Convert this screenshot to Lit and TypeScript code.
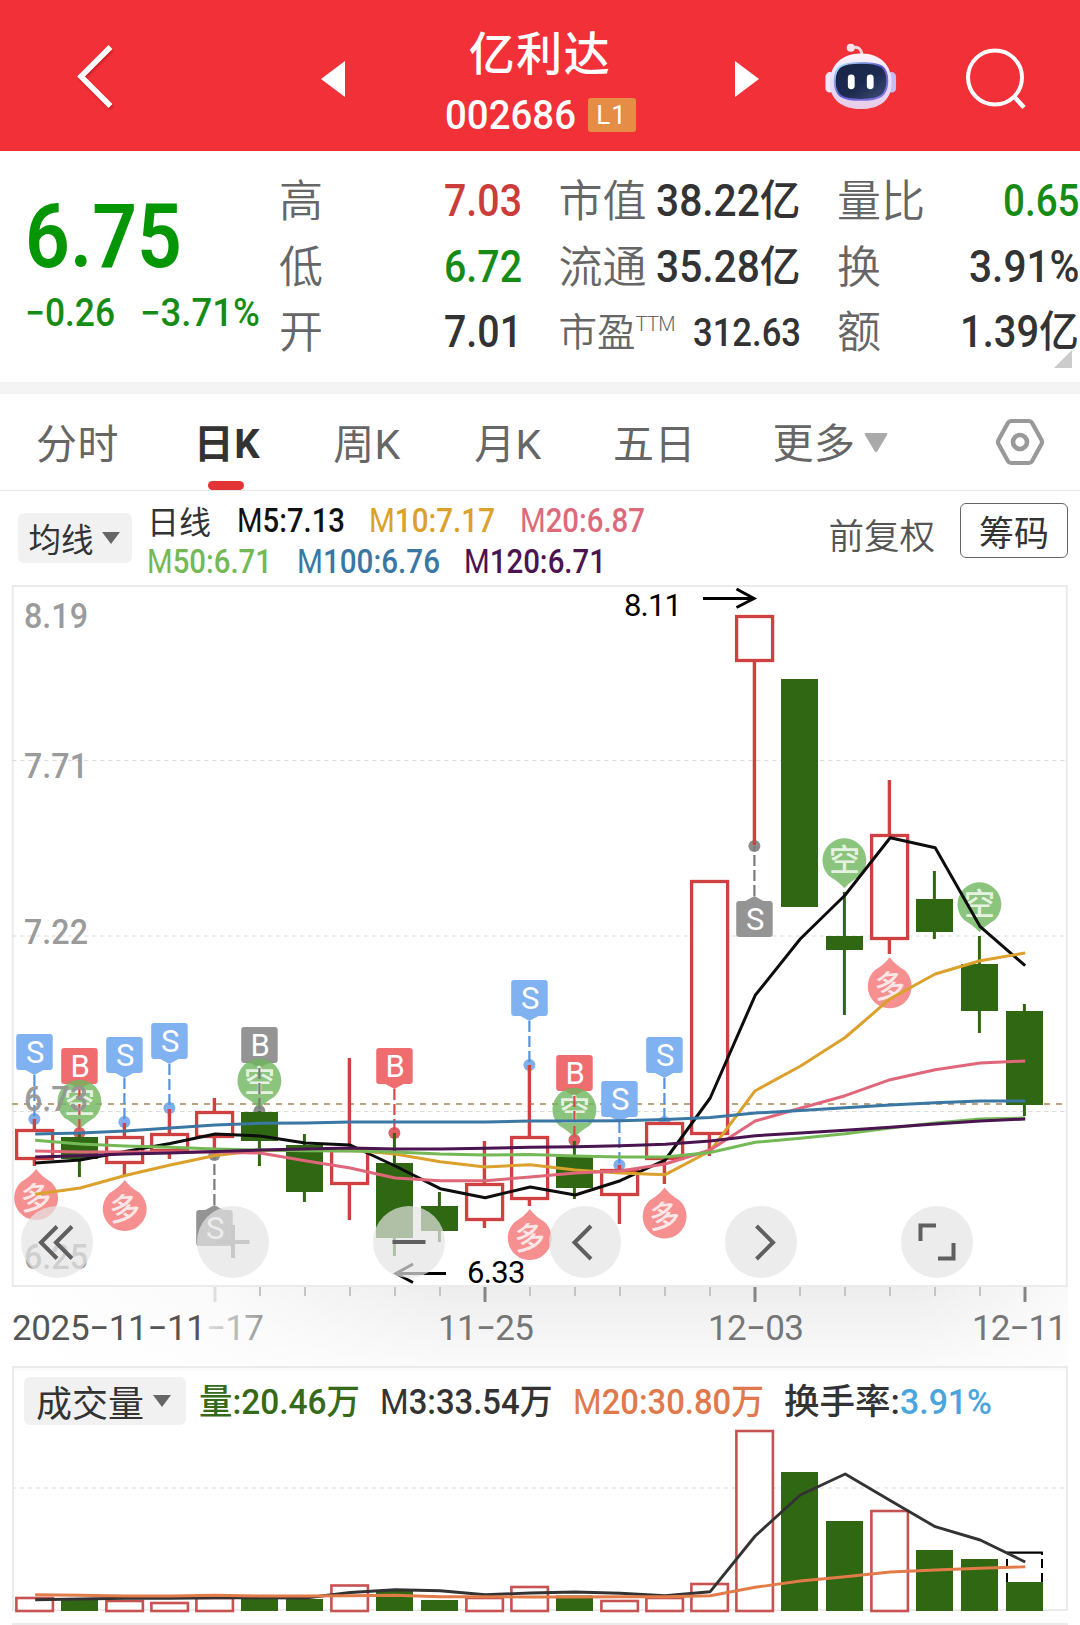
import { LitElement, html, svg, css, nothing } from "lit";
import { customElement, property } from "lit/decorators.js";

const RED = "#cf4040";
const GREEN = "#2f6713";
const STEP = 45;
const cx = (i: number) => 34.4 + i * STEP;

/* [rising, body top, body bottom, high, low] */
const candles: [boolean, number, number, number, number][] = [
  [true, 1129, 1160, 1119, 1166],
  [false, 1137, 1159, 1133, 1177],
  [true, 1136, 1164, 1123, 1175],
  [true, 1133, 1152, 1109, 1159],
  [true, 1111, 1138, 1098, 1154],
  [false, 1112, 1141, 1111, 1166],
  [false, 1145, 1192, 1134, 1202],
  [true, 1149, 1185, 1058, 1220],
  [false, 1163, 1238, 1133, 1256],
  [false, 1206, 1231, 1192, 1242],
  [true, 1183, 1221, 1141, 1228],
  [true, 1136, 1200, 1065, 1206],
  [false, 1157, 1188, 1141, 1199],
  [true, 1169, 1196, 1165, 1224],
  [true, 1122, 1160, 1122, 1184],
  [true, 880, 1135, 880, 1156],
  [true, 615, 662, 615, 845],
  [false, 679, 907, 679, 907],
  [false, 936, 950, 892, 1015],
  [true, 834, 940, 780, 954],
  [false, 899, 932, 871, 939],
  [false, 964, 1011, 936, 1033],
  [false, 1011, 1105, 1004, 1116],
];

const averages: { color: string; ys: number[] }[] = [
  { color: "#0d0d0d", ys: [1163, 1160, 1151.5, 1143.5, 1134, 1136, 1143, 1145, 1166, 1188.7, 1197.7, 1187, 1195, 1180.7, 1160, 1098, 995.3, 939, 895, 837.7, 847.7, 926.7, 965.7] },
  { color: "#dba12c", ys: [1194.3, 1188, 1175.5, 1165, 1155.5, 1150.5, 1150, 1150, 1154, 1161.7, 1167, 1164.7, 1170, 1173, 1174.7, 1151, 1090.7, 1066.3, 1037.5, 998.7, 974, 960.7, 953] },
  { color: "#e0667a", ys: [1151, 1152, 1152, 1152, 1152, 1153, 1160.7, 1168, 1178, 1180.7, 1180.7, 1177, 1173, 1171, 1164, 1150, 1121, 1108.3, 1095.7, 1079.7, 1069.7, 1063, 1061] },
  { color: "#74b956", ys: [1140.3, 1144, 1146, 1147.3, 1149, 1150, 1150.7, 1151, 1152, 1154, 1155, 1154.5, 1156, 1157, 1157, 1152.5, 1142.3, 1138.3, 1133.7, 1128, 1123, 1119, 1118] },
  { color: "#3b77a3", ys: [1134, 1133, 1131, 1128, 1125, 1123.3, 1123, 1122, 1122, 1122, 1122, 1121, 1121, 1120.7, 1119.5, 1117.5, 1113, 1110.6, 1107.7, 1105, 1102.7, 1101, 1101] },
  { color: "#4a1450", ys: [1157, 1155.7, 1154, 1153, 1151.6, 1150, 1149, 1148, 1149, 1149, 1148.3, 1147.3, 1146.7, 1145.7, 1144.3, 1141, 1135.7, 1133, 1130.3, 1127.3, 1124, 1121, 1119] },
];

/* [index, letter, kind, badge top, anchor dot y] */
const signals: [number, string, string, number, number][] = [
  [0, "S", "blue", 1034, 1119],
  [1, "B", "red", 1048, 1133],
  [2, "S", "blue", 1037, 1122],
  [3, "S", "blue", 1023, 1108],
  [4, "S", "gray", 1210, 1155],
  [5, "B", "gray", 1027, 1111],
  [8, "B", "red", 1048, 1133],
  [11, "S", "blue", 980, 1065],
  [12, "B", "red", 1055, 1140],
  [13, "S", "blue", 1081, 1165],
  [14, "S", "blue", 1037, 1122],
  [16, "S", "gray", 901, 846],
];
const signalFill: Record<string, string> = { blue: "#80b1f1", red: "#ef6c6f", gray: "#949494" };
const signalLine: Record<string, string> = { blue: "#5593dd", red: "#d9484c", gray: "#7b7b7b" };

/* [index, character, circle centre y, x shift] */
const balloons: [number, string, number, number][] = [
  [1, "空", 1101.7, 0],
  [5, "空", 1080.7, 0],
  [12, "空", 1109.7, 0],
  [18, "空", 860.3, 0],
  [21, "空", 904.3, 0],
  [0, "多", 1198, 1.7],
  [2, "多", 1209, 0.3],
  [11, "多", 1238, 0.3],
  [14, "多", 1216.5, 0.2],
  [19, "多", 986.3, 0.3],
];

const volumeTops = [1597, 1600, 1600, 1602, 1597, 1599, 1599, 1584.5, 1591, 1600, 1597, 1586, 1595.5, 1600, 1597, 1583, 1430, 1472, 1521, 1510, 1550, 1559, 1582];
const volumeUp = candles.map((c) => c[0]);
const volM3 = [1599.7, 1599, 1598.3, 1598.3, 1597.7, 1597.7, 1598, 1592.5, 1589.7, 1590.7, 1594.7, 1593, 1592, 1593.3, 1595.7, 1591.7, 1536, 1495, 1474, 1500.5, 1526.7, 1540, 1562];
const volM20 = [1594.8, 1595.3, 1596, 1596, 1595.3, 1596, 1596, 1595.7, 1595.2, 1596.7, 1596.8, 1597, 1597, 1596.8, 1596.7, 1595.7, 1587.3, 1581, 1576.7, 1572, 1570, 1568.3, 1566.8];

const points = (ys: number[]) => ys.map((y, i) => `${(cx(i) + 0.8).toFixed(1)},${y}`).join(" ");

/* Text condensed or widened to a fixed advance; its bottom edge is the baseline. */
@customElement("fit-text")
class FitText extends LitElement {
  @property() text = "";
  @property() lead = "";
  @property({ type: Number }) w = 100;
  @property({ type: Number }) size = 32;
  static styles = css`
    :host { display: block; flex: none; }
    svg { display: block; overflow: visible; }
    text { fill: currentColor; font-family: Roboto, "Noto Sans CJK SC", sans-serif; }
    .lead { font-weight: 400; }
  `;
  render() {
    const h = Math.round(this.size * 0.72);
    return html`<svg width=${this.w} height=${h}>
      <text x="0" y=${h} font-size=${this.size} textLength=${this.w} lengthAdjust="spacingAndGlyphs">${this.lead ? svg`<tspan class="lead">${this.lead}</tspan>` : nothing}${this.text}</text>
    </svg>`;
  }
}

@customElement("stock-header")
class StockHeader extends LitElement {
  static styles = css`
    :host { display: grid; grid-template-columns: 305px 56px 358px 56px 36px 104px 1fr; height: 151px; background: #f23038; color: #fff; align-items: center; }
    svg { display: block; }
    .back { margin-left: 71px; margin-top: 1px; filter: drop-shadow(1px 2px 1px rgba(120, 0, 0, 0.35)); }
    .prev { margin-left: 15px; margin-top: 7px; }
    .next { margin-left: 15px; margin-top: 7px; }
    .mid { display: flex; flex-direction: column; align-items: center; margin-top: 9px; }
    .name { font: 500 46px/56px "Noto Sans CJK SC", sans-serif; letter-spacing: 1.5px; margin-top: 2px; }
    .code { display: flex; align-items: center; gap: 12px; font-weight: 400; margin-top: 20px; margin-bottom: 9px; height: 34px; }
    .num { font-weight: 500; }
    .lv { width: 48px; height: 34px; border-radius: 3px; background: #e58d45; font: 400 26px/35px Roboto, sans-serif; text-align: center; letter-spacing: 1px; }
    .bot { margin-left: 13px; margin-top: 1px; }
    .search { margin-left: 48px; margin-top: 6px; }
  `;
  render() {
    return html`
      <svg class="back" width="44" height="68" viewBox="0 0 44 68"><path d="M39.5 5 10 34.5 39.5 64" fill="none" stroke="#fff" stroke-width="5.500" /></svg>
      <svg class="prev" width="26" height="36"><path d="M1 18 25 0V36Z" fill="#fff" /></svg>
      <div class="mid">
        <div class="name">亿利达</div>
        <div class="code"><fit-text class="num" text="002686" w="131" size="40"></fit-text><span class="lv">L1</span></div>
      </div>
      <svg class="next" width="26" height="36"><path d="M25 18 1 0V36Z" fill="#fff" /></svg>
      <span></span>
      <svg class="bot" width="74" height="70" viewBox="0 0 76 70">
        <defs>
          <linearGradient id="shell" x1="0" y1="0" x2="0" y2="1"><stop offset="0" stop-color="#fdf3fa" /><stop offset=".5" stop-color="#e6defa" /><stop offset="1" stop-color="#e9cbe6" /></linearGradient>
          <linearGradient id="face" x1="0" y1="0" x2="1" y2="1"><stop offset="0" stop-color="#1a2246" /><stop offset=".55" stop-color="#1c2a50" /><stop offset="1" stop-color="#42507a" /></linearGradient>
          <linearGradient id="rim" x1="0" y1="0" x2="1" y2="1"><stop offset="0" stop-color="#b9f1ff" /><stop offset=".5" stop-color="#5d58cf" /><stop offset="1" stop-color="#8f7be8" /></linearGradient>
        </defs>
        <path d="M28 6.5C34 4 38 6 39 13" fill="none" stroke="#fbd3dc" stroke-width="3" />
        <circle cx="27.500" cy="6" r="4.200" fill="#fbe3ea" />
        <rect x="1.500" y="31" width="9" height="21" rx="4.500" fill="#f1e6fa" /><rect x="65" y="31" width="9" height="21" rx="4.500" fill="#c6bdf0" />
        <path d="M38 12C59 12 69.500 25 69.500 42 69.500 60 57 69 38 69S6 60 6 42C6 25 17 12 38 12Z" fill="url(#shell)" />
        <path d="M38 21.500C58 21.500 65 25 65 40S58 59.500 38 59.500 11 55 11 40 18 21.500 38 21.500Z" fill="url(#face)" stroke="url(#rim)" stroke-width="2" />
        <rect x="24.500" y="33.500" width="7" height="15" rx="3.500" fill="#fff" /><rect x="44" y="33.500" width="7" height="15" rx="3.500" fill="#fff" />
      </svg>
      <svg class="search" width="64" height="64" viewBox="0 0 64 64"><circle cx="32" cy="30.500" r="27" fill="none" stroke="#fff" stroke-width="4" /><path d="M51.500 50 61 60.500" stroke="#fff" stroke-width="4.500" /></svg>
    `;
  }
}

@customElement("quote-panel")
class QuotePanel extends LitElement {
  static styles = css`
    :host { display: flex; height: 231px; background: #fff; border-bottom: 12px solid #f4f4f4; font-weight: 500; color: #333; position: relative; }
    .main { width: 279px; flex: none; color: #049604; }
    .price { margin: 52px 0 0 25px; font-weight: 600; }
    .chg { display: flex; gap: 25px; margin: 32px 0 0 25px; color: #168c16; }
    .grid { flex: 1; display: grid; grid-template-columns: 243px 242px 1fr; grid-template-rows: repeat(3, 65.5px); column-gap: 36.5px; margin: 17px 1px 0 0; }
    .cell { display: flex; justify-content: space-between; align-items: center; }
    .label { font: 350 44px/65px "Noto Sans CJK SC", sans-serif; color: #666; margin-top: -4px; white-space: nowrap; }
    .pe { font-size: 38.5px; display: flex; }
    .ttm { font: 300 20px/24px Roboto, sans-serif; margin: 15px 0 0 0; letter-spacing: -0.6px; }
    .up { color: #cb3d3b; }
    .down { color: #168c16; }
    .corner { position: absolute; right: 8px; bottom: 14px; width: 18px; height: 18px; background: #ccc; clip-path: polygon(100% 0, 100% 100%, 0 100%); }
  `;
  render() {
    const cell = (label: unknown, value: string, w: number, cls = "", size = 43.5) =>
      html`<div class="cell"><span class="label">${label}</span><fit-text class=${cls} text=${value} w=${w} size=${size}></fit-text></div>`;
    return html`
      <div class="main">
        <fit-text class="price" text="6.75" w="157" size="89"></fit-text>
        <div class="chg"><fit-text text="−0.26" w="90" size="38"></fit-text><fit-text text="−3.71%" w="120" size="38"></fit-text></div>
      </div>
      <div class="grid">
        ${cell("高", "7.03", 78, "up")} ${cell("市值", "38.22亿", 144.5)} ${cell("量比", "0.65", 76.5, "down")}
        ${cell("低", "6.72", 78, "down")} ${cell("流通", "35.28亿", 144.5)} ${cell("换", "3.91%", 110.5)}
        ${cell("开", "7.01", 78)} ${cell(html`<span class="pe">市盈<span class="ttm">TTM</span></span>`, "312.63", 108, "", 39)} ${cell("额", "1.39亿", 119)}
      </div>
      <i class="corner"></i>
    `;
  }
}

@customElement("period-tabs")
class PeriodTabs extends LitElement {
  static styles = css`
    :host { display: grid; grid-template-columns: 155px 146px 132px 150px 143px 200px 1fr; height: 96px; border-bottom: 1.500px solid #e6e6e6; background: #fff; justify-items: center; font: 400 41px/96px Roboto, "Noto Sans CJK SC", sans-serif; color: #666; }
    .tab { letter-spacing: 0.5px; position: relative; white-space: nowrap; margin-top: 3px; height: 93px; }
    .on { color: #333; font-weight: 700; font-size: 40px; margin-left: -2px; }
    .on::after { content: ""; position: absolute; left: 50%; margin-left: -19px; bottom: 0; width: 36px; height: 9px; border-radius: 4.500px; background: #e23434; }
    .more { display: flex; align-items: center; gap: 8px; margin-left: 8px; }
    .more svg { margin-top: -2px; }
    svg { display: block; }
    .gear { margin-top: 24px; margin-left: 34px; }
  `;
  render() {
    return html`
      <span class="tab">分时</span>
      <span class="tab on">日K</span>
      <span class="tab">周K</span>
      <span class="tab">月K</span>
      <span class="tab">五日</span>
      <span class="tab more">更多<svg width="24" height="20"><path d="M2 0H22Q24 0 23 2L13.500 18Q12 20 10.500 18L1 2Q0 0 2 0Z" fill="#aaa" /></svg></span>
      <svg class="gear" width="50" height="48" viewBox="0 0 50 48"><path d="M16 3H34Q36 3 37 4.700L46.500 22Q47.500 24 46.500 26L37 43.300Q36 45 34 45H16Q14 45 13 43.300L3.500 26Q2.500 24 3.500 22L13 4.700Q14 3 16 3Z" fill="none" stroke="#999" stroke-width="4.200" /><circle cx="25" cy="24" r="7" fill="none" stroke="#999" stroke-width="4.600" /></svg>
    `;
  }
}

@customElement("average-legend")
class AverageLegend extends LitElement {
  static styles = css`
    :host { display: flex; height: 94px; background: #fff; font-weight: 500; }
    .pick { width: 114px; height: 50px; margin: 22px 0 0 18px; border-radius: 6px; background: #f1f1f1; display: flex; align-items: center; justify-content: center; gap: 8px; font: 400 32.500px/48px "Noto Sans CJK SC", sans-serif; color: #333; flex: none; box-sizing: border-box; padding-right: 2px; }
    .rows { margin: 17px 0 0 15px; flex: 1; display: flex; flex-direction: column; gap: 17px; }
    .row { display: flex; gap: 24.500px; height: 24px; align-items: flex-end; }
    .first { color: #333; margin-right: 1px; font: 400 32px/24px "Noto Sans CJK SC", sans-serif; }
    .adj { font: 350 35.500px/36px "Noto Sans CJK SC", sans-serif; color: #555; margin: 25px 25px 0 0; flex: none; }
    .chip { box-sizing: border-box; width: 108px; height: 55px; margin: 12px 12px 0 0; border: 1.500px solid #666; border-radius: 6px; font: 400 35px/54px "Noto Sans CJK SC", sans-serif; text-align: center; color: #333; flex: none; }
    .m5 { color: #111; } .m10 { color: #dba12c; } .m20 { color: #dc6a7b; } .m50 { color: #74b956; } .m100 { color: #3b77a3; } .m120 { color: #4a1450; }
  `;
  render() {
    const m = (cls: string, text: string, w: number) => html`<fit-text class=${cls} lead="M" text=${text} w=${w} size="33.500"></fit-text>`;
    return html`
      <div class="pick">均线<svg width="18" height="12"><path d="M0 0H18L9 12Z" fill="#666" /></svg></div>
      <div class="rows">
        <div class="row"><span class="first">日线</span>${m("m5", "5:7.13", 108)}${m("m10", "10:7.17", 126)}${m("m20", "20:6.87", 125)}</div>
        <div class="row">${m("m50", "50:6.71", 125)}${m("m100", "100:6.76", 143)}${m("m120", "120:6.71", 142)}</div>
      </div>
      <span class="adj">前复权</span>
      <span class="chip">筹码</span>
    `;
  }
}

@customElement("kline-chart")
class KlineChart extends LitElement {
  static styles = css`
    :host { display: block; position: relative; height: 781px; background: #fff; }
    .plot { display: block; overflow: visible; }
    text { font-family: Roboto, "Noto Sans CJK SC", sans-serif; }
    .tools { position: absolute; left: 21px; top: 621px; display: flex; gap: 104px; }
    .tool { width: 72px; height: 72px; border-radius: 50%; background: rgba(228, 228, 228, 0.71); }
    .tool svg { display: block; fill: none; stroke: #5f5f5f; stroke-width: 4; }
    .tool .faded { stroke: #c9c9c9; }
  `;

  candle(c: (typeof candles)[number], i: number) {
    const [up, top, bottom, high, low] = c;
    const x = cx(i);
    const color = up ? RED : GREEN;
    const sw = up ? 3.4 : 3;
    return svg`
      ${high < top ? svg`<path d="M${x} ${high}V${top}" stroke=${color} stroke-width=${sw} />` : nothing}
      ${low > bottom ? svg`<path d="M${x} ${bottom}V${low}" stroke=${color} stroke-width=${sw} />` : nothing}
      ${up
        ? svg`<rect x=${x - 17.8} y=${top + 1.5} width="36" height=${bottom - top - 3} fill="#fff" stroke=${RED} stroke-width="3.300" />`
        : svg`<rect x=${x - 18.4} y=${top} width="37" height=${bottom - top} fill=${GREEN} />`}
    `;
  }

  badge(s: (typeof signals)[number]) {
    const [i, letter, kind, top] = s;
    const x = cx(i);
    const below = s[4] < top;
    const tail = below ? `M${x - 9} ${top}L${x} ${top - 5}L${x + 9} ${top}Z` : `M${x - 9} ${top + 36}L${x} ${top + 41}L${x + 9} ${top + 36}Z`;
    return svg`
      <rect x=${x - 18.2} y=${top} width="36.500" height="36" rx="3" fill=${signalFill[kind]} />
      <path d=${tail} fill=${signalFill[kind]} />
      <text x=${x + 0.7} y=${top + 29} text-anchor="middle" font-size="31" fill="#fff">${letter}</text>
    `;
  }

  stem(s: (typeof signals)[number]) {
    const [i, , kind, top, dot] = s;
    const x = cx(i);
    const from = dot < top ? top - 5 : top + 41;
    return svg`<path d="M${x} ${from}V${dot}" stroke=${signalLine[kind]} stroke-width="2.200" stroke-dasharray="11 4" />`;
  }

  balloon(b: (typeof balloons)[number]) {
    const [i, ch, y, dx] = b;
    const x = cx(i) + dx;
    const bear = ch === "空";
    const k = bear ? 1 : -1;
    const tip = bear ? 28 : 29;
    return svg`
      <g opacity="0.8">
        <path d="M${x} ${y - k * 22}A22 22 0 0 ${bear ? 1 : 0} ${x + 15} ${y + k * 16}Q${x + 5} ${y + k * 22} ${x} ${y + k * tip}Q${x - 5} ${y + k * 22} ${x - 15} ${y + k * 16}A22 22 0 0 ${bear ? 1 : 0} ${x} ${y - k * 22}Z" fill=${bear ? "#6eb65c" : "#f47474"} />
      </g>
      <text x=${x} y=${y + 11} text-anchor="middle" font-size="31" font-weight="500" fill="#fff" fill-opacity=".8" transform=${bear ? "" : `rotate(-5 ${x} ${y})`}>${ch}</text>
    `;
  }

  render() {
    const scale: [string, number][] = [["8.19", 628], ["7.71", 778], ["7.22", 944], ["6.73", 1111], ["6.25", 1269]];
    const icons = [
      svg`<path d="M36 20.500 20 36.500 36 52.500M51 20.500 35 36.500 51 52.500" />`,
      svg`<path class="faded" d="M36 19V52M19.500 36H52.500" />`,
      svg`<path d="M19.500 36H52.500" />`,
      svg`<path d="M42 20 25.500 36.500 42 53" />`,
      svg`<path d="M31.500 20 48 36.500 31.500 53" />`,
      svg`<path d="M19.500 35V19.500H35M37 52.500H52.500V37" />`,
    ];
    return html`
      <svg class="plot" width="1080" height="781" viewBox="0 585 1080 781">
        <defs>
          <linearGradient id="axis" x1="0" y1="0" x2="0" y2="1"><stop offset="0" stop-color="#ededed" /><stop offset="1" stop-color="#fafafa" /></linearGradient>
          <linearGradient id="veil" x1="0" y1="0" x2="1" y2="0"><stop offset="0" stop-color="#fff" /><stop offset=".18" stop-color="#fff" stop-opacity=".75" /><stop offset=".42" stop-color="#fff" stop-opacity="0" /><stop offset=".85" stop-color="#fff" stop-opacity="0" /><stop offset="1" stop-color="#fff" stop-opacity=".7" /></linearGradient>
          <linearGradient id="fade" gradientUnits="userSpaceOnUse" x1="205" y1="0" x2="264" y2="0"><stop offset="0" stop-color="#dedede" /><stop offset="1" stop-color="#999" /></linearGradient>
        </defs>
        <rect x="12" y="1286" width="1056" height="80" fill="url(#axis)" />
        <rect x="12" y="1286" width="1056" height="80" fill="url(#veil)" />
        <rect x="12.800" y="586" width="1054" height="700" fill="#fff" stroke="#ebebeb" stroke-width="2" />
        ${[760.5, 936, 1111.5].map((y) => svg`<path d="M12 ${y}H1066" stroke="#dcdcdc" stroke-width="1.200" stroke-dasharray="4.500 3.500" />`)}
        <path d="M12 1104H1063" stroke="#b9a47c" stroke-width="2" stroke-dasharray="6 6" />
        ${signals.map((s) => svg`<circle cx=${cx(s[0])} cy=${s[4]} r="6" fill=${s[2] === "blue" ? "#80aeea" : s[2] === "red" ? "#dd6064" : "#8c8c8c"} />`)}
        ${candles.map((c, i) => this.candle(c, i))}
        ${signals.map((s) => this.badge(s))}
        ${balloons.map((b) => this.balloon(b))}
        ${signals.map((s) => this.stem(s))}
        ${averages.map((a) => svg`<polyline points=${points(a.ys)} fill="none" stroke=${a.color} stroke-width="3" stroke-linejoin="round" />`)}
        ${scale.map(([t, y]) => svg`<text x="24" y=${y} font-size="34.500" font-weight="500" fill="#959595" fill-opacity=".95" textLength="64" lengthAdjust="spacingAndGlyphs">${t}</text>`)}
        <g fill="none" stroke="#000" stroke-width="3">
          <path d="M703 598.500H753M736.500 589 754 598.500 736.500 607.500" /><path d="M446 1273.500H397M413 1264 396 1273.500 413 1282.500" />
        </g>
        <text x="624" y="616" font-size="31" textLength="58">8.11</text>
        <text x="467" y="1283" font-size="31" textLength="58.500">6.33</text>
        ${candles.map((_, i) => {
          if (i < 4) return nothing;
          const major = (i - 4) % 6 === 0;
          return svg`<path d="M${cx(i) + 0.6} 1287V${major ? 1302 : 1296}" stroke=${i === 4 ? "#dedede" : major ? "#858585" : "#c4c4c4"} stroke-width=${major ? 3 : 2} />`;
        })}
        <g font-size="35" font-weight="400" fill="#767676">
          <text x="12" y="1340" fill="#555" textLength="194">2025−11−11</text>
          <text x="206" y="1340" fill="url(#fade)" textLength="58">−17</text>
          <text x="438" y="1340" textLength="96">11−25</text>
          <text x="708" y="1340" textLength="96">12−03</text>
          <text x="972" y="1340" textLength="95">12−11</text>
        </g>
      </svg>
      <div class="tools">${icons.map((p) => html`<span class="tool"><svg width="72" height="72" viewBox="0 0 72 72">${p}</svg></span>`)}</div>
    `;
  }
}

@customElement("volume-chart")
class VolumeChart extends LitElement {
  static styles = css`
    :host { display: block; height: 259px; overflow: hidden; background: #fff; }
    .box { height: 245px; box-sizing: border-box; margin: 0 12px 0 12px; border: 2px solid #ebebeb; display: flex; flex-direction: column; background: linear-gradient(#fafafa 3px, #fff 3px); }
    .head { display: flex; align-items: center; height: 48px; margin: 9px 0 0 10px; font-weight: 500; gap: 20px; flex: none; }
    .pick { width: 162px; height: 48px; border-radius: 6px; background: #f1f1f1; display: flex; align-items: center; justify-content: center; gap: 9px; font: 400 36px/46px "Noto Sans CJK SC", sans-serif; color: #333; margin-right: -7px; padding-right: 3px; box-sizing: border-box; }
    .v { color: #356a18; } .m3 { color: #333; } .m20 { color: #e0794b; } .rate { display: flex; align-items: center; margin-left: 0; } .t { color: #333; } .p { color: #4aa5dc; }
    .plot { display: block; margin: 0 0 0 -14px; overflow: visible; flex: none; }
    .next { margin: 12px 12px 0 12px; height: 2px; background: #ebebeb; }
  `;
  render() {
    return html`
      <div class="box">
        <div class="head">
          <span class="pick">成交量<svg width="18" height="12"><path d="M0 0H18L9 12Z" fill="#666" /></svg></span>
          <fit-text class="v" text="量:20.46万" w="161" size="35.500"></fit-text>
          <fit-text class="m3" lead="M" text="3:33.54万" w="172.500" size="35.500"></fit-text>
          <fit-text class="m20" lead="M" text="20:30.80万" w="191" size="35.500"></fit-text>
          <span class="rate"><fit-text class="t" text="换手率:" w="116" size="35.500"></fit-text><fit-text class="p" text="3.91%" w="92" size="35.500"></fit-text></span>
        </div>
        <svg class="plot" width="1080" height="186" viewBox="0 1425 1080 186">
          <path d="M12 1488H1066" stroke="#e6e6e6" stroke-width="1.600" stroke-dasharray="4 4" />
          ${volumeTops.map((y, i) =>
            volumeUp[i]
              ? svg`<rect x=${cx(i) - 18} y=${y + 1} width="36.500" height=${1610 - y} fill="#fff" stroke="#c65252" stroke-width="2.600" />`
              : svg`<rect x=${cx(i) - 18.4} y=${y} width="37" height=${1611 - y} fill=${GREEN} />`
          )}
          <path d="M${cx(22) - 17.4} 1582V1552.700H${cx(22) + 17.6}V1582" fill="#fff" stroke="none" />
          <path d="M${cx(22) - 17.4} 1552.700H${cx(22) + 18.4}" stroke="#000" stroke-width="2.200" />
          <path d="M${cx(22) - 17.4} 1559V1568M${cx(22) - 17.4} 1573V1582M${cx(22) + 17.6} 1552V1555M${cx(22) + 17.6} 1559V1568M${cx(22) + 17.6} 1573V1582" stroke="#000" stroke-width="2" />
          <polyline points=${points(volM3)} fill="none" stroke="#333" stroke-width="2.900" stroke-linejoin="round" />
          <polyline points=${points(volM20)} fill="none" stroke="#e37b49" stroke-width="2.900" stroke-linejoin="round" />
        </svg>
      </div>
      <div class="next"></div>
    `;
  }
}

@customElement("app-root")
class AppRoot extends LitElement {
  static styles = css`
    :host { display: block; width: 1080px; height: 1625px; overflow: hidden; background: #fff; }
  `;
  render() {
    return html`
      <stock-header></stock-header>
      <quote-panel></quote-panel>
      <period-tabs></period-tabs>
      <average-legend></average-legend>
      <kline-chart></kline-chart>
      <volume-chart></volume-chart>
    `;
  }
}
